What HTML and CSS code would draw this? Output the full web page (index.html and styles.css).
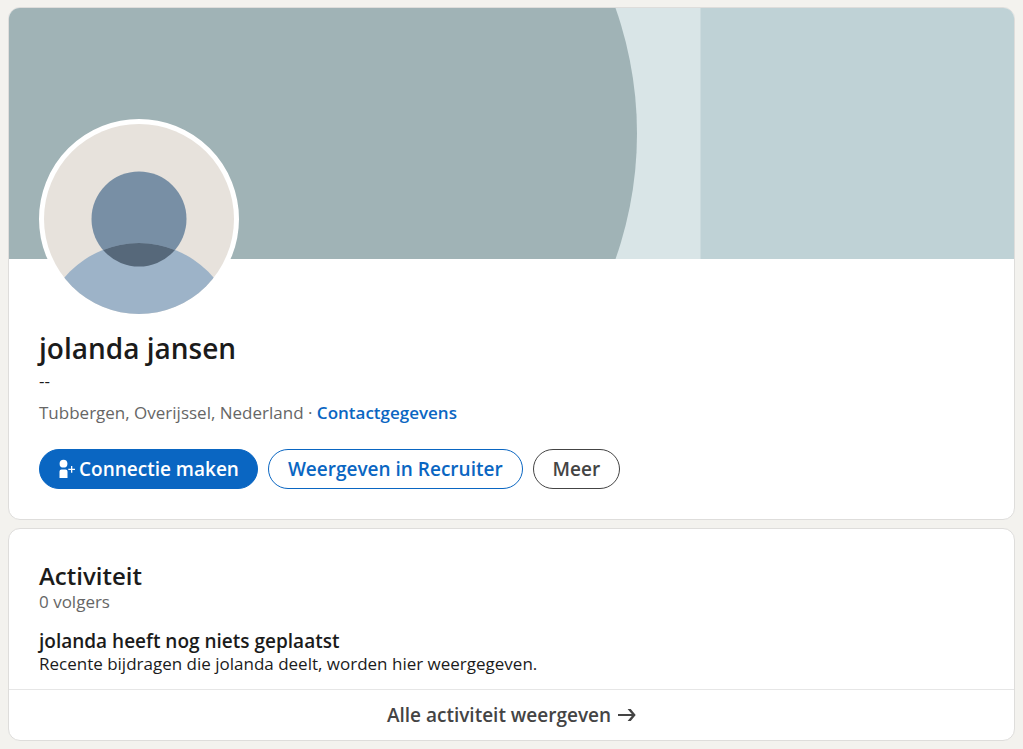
FILE: index.html
```html
<!DOCTYPE html>
<html lang="nl">
<head>
    <meta charset="UTF-8">
    <meta name="viewport" content="width=device-width, initial-scale=1.0">
    <title>jolanda jansen</title>
    <link rel="stylesheet" href="styles.css">
</head>
<body>
    <main class="page">
        <section class="card">
            <svg class="banner" viewBox="0 0 1005 251" aria-hidden="true">
                <rect width="1005" height="251" fill="#d9e5e7"/>
                <rect x="691.5" width="313.5" height="251" fill="#bfd2d6"/>
                <circle cx="251" cy="125.5" r="377" fill="#a0b3b6"/>
            </svg>

            <div class="profile">
                <svg class="avatar" viewBox="0 0 190 190" aria-hidden="true">
                    <clipPath id="head"><circle cx="95" cy="95" r="47.5"/></clipPath>
                    <rect width="190" height="190" fill="#e7e2dc"/>
                    <circle cx="95" cy="95" r="47.5" fill="#788fa5"/>
                    <circle cx="95" cy="216.7" r="97.7" fill="#9db3c8"/>
                    <circle cx="95" cy="216.7" r="97.7" fill="#56687a" clip-path="url(#head)"/>
                </svg>

                <h1>jolanda jansen</h1>
                <p class="headline">--</p>
                <p class="location">Tubbergen, Overijssel, Nederland · <a href="#contact">Contactgegevens</a></p>

                <div class="actions">
                    <button type="button" class="btn btn-primary">
                        <svg viewBox="0 0 17 20" width="17" height="20" fill="currentColor" aria-hidden="true">
                            <circle cx="5.500" cy="4.700" r="3.900"/>
                            <path d="M1.500 19v-6.500A2 2 0 0 1 3.500 10.500h4a2 2 0 0 1 2 2V19zM13 7h1.300v2.700H17V11h-2.700v2.700H13V11h-2.700V9.700H13z"/>
                        </svg>
                        Connectie maken
                    </button>
                    <button type="button" class="btn btn-outline">Weergeven in Recruiter</button>
                    <button type="button" class="btn btn-more">Meer</button>
                </div>
            </div>
        </section>

        <section class="card">
            <div class="activity">
                <h2>Activiteit</h2>
                <p class="followers">0 volgers</p>
                <h3>jolanda heeft nog niets geplaatst</h3>
                <p class="empty">Recente bijdragen die jolanda deelt, worden hier weergegeven.</p>
            </div>
            <a class="show-all" href="#activiteit">
                Alle activiteit weergeven
                <svg viewBox="0 0 18 16" width="18" height="16" fill="currentColor" aria-hidden="true">
                    <path d="M0 7h13.800L9.600 2h3.100l5 6-5 6H9.600l4.200-5H0z"/>
                </svg>
            </a>
        </section>
    </main>
</body>
</html>
```
FILE: styles.css
```css
* {
    box-sizing: border-box;
}

body {
    margin: 0;
    background-color: #f3f2ee;
    color: #1b1b1b;
    font-family: "Segoe UI", "Open Sans", "Noto Sans", sans-serif;
    font-size: 17px;
    line-height: 24px;
}

h1, h2, h3, p {
    margin: 0;
    font-weight: 600;
}

p {
    font-weight: 400;
}

.page {
    display: flex;
    flex-direction: column;
    gap: 8px;
    padding: 7px 8px 8px;
}

.card {
    overflow: hidden;
    background-color: #fff;
    border: 1px solid #dedddb;
    border-radius: 12px;
}

.banner {
    display: block;
    width: 100%;
}

.profile {
    position: relative;
    padding: 0 30px 30px;
}

.avatar {
    display: block;
    width: 200px;
    height: 200px;
    margin-top: -140px;
    border: 5px solid #fff;
    border-radius: 50%;
    background-color: #fff;
}

h1 {
    margin-top: 9px;
    font-size: 28px;
    line-height: 40px;
}

.headline {
    margin-top: 1px;
}

.location {
    margin-top: 8px;
    color: #666;
}

.location a {
    color: #0a66c2;
    font-weight: 600;
    text-decoration: none;
}

.actions {
    display: flex;
    flex-wrap: wrap;
    gap: 10px;
    margin-top: 24px;
}

.btn {
    display: flex;
    align-items: center;
    gap: 4px;
    height: 40px;
    padding: 0 19px;
    border: 1px solid #0a66c2;
    border-radius: 20px;
    background-color: #fff;
    font-family: inherit;
    font-size: 19px;
    font-weight: 600;
    cursor: pointer;
}

.btn-primary {
    padding: 0 18px;
    background-color: #0a66c2;
    color: #fff;
}

.btn-outline {
    color: #0a66c2;
}

.btn-more {
    border-color: #444;
    color: #444;
}

.activity {
    padding: 31px 30px 13px;
}

h2 {
    font-size: 24px;
    line-height: 32px;
}

.followers {
    line-height: 20px;
    color: #666;
}

h3 {
    margin-top: 18px;
    font-size: 19px;
    line-height: 22px;
}

.show-all {
    display: flex;
    align-items: center;
    justify-content: center;
    gap: 7px;
    padding: 13px 0;
    border-top: 1px solid #e6e6e6;
    color: #444;
    font-size: 19px;
    font-weight: 600;
    text-decoration: none;
}
```
